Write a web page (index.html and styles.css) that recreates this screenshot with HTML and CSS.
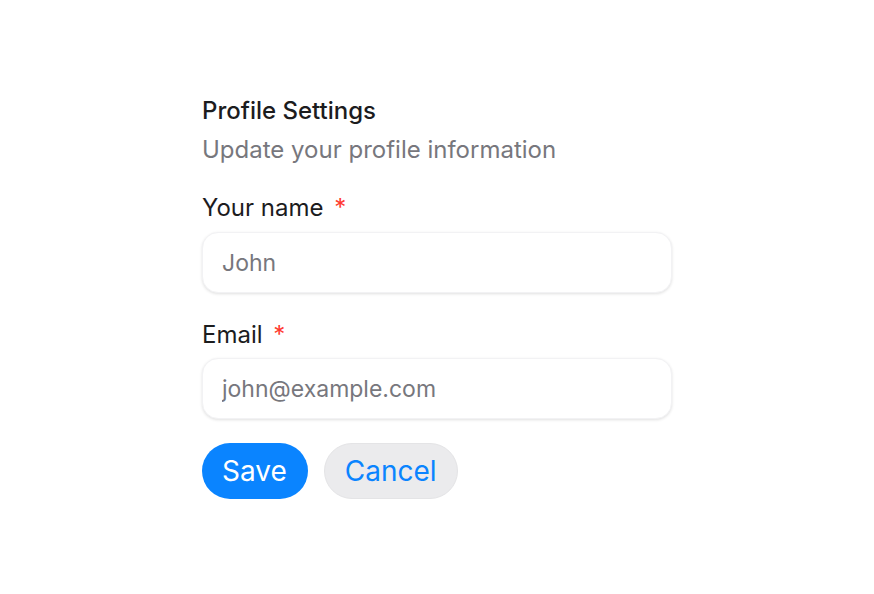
FILE: index.html
```html
<!DOCTYPE html>
<html>
<head>
<meta charset="utf-8">
<link rel="stylesheet" href="styles.css">
</head>
<body>
<main class="page">
  <form class="card">
    <h1 class="title">Profile Settings</h1>
    <p class="subtitle">Update your profile information</p>
    <div class="field">
      <label class="label">Your name <span class="req">*</span></label>
      <input class="input" type="text" placeholder="John">
    </div>
    <div class="field">
      <label class="label">Email <span class="req">*</span></label>
      <input class="input input-last" type="email" placeholder="john@example.com">
    </div>
    <div class="actions">
      <button type="button" class="btn btn-primary">Save</button>
      <button type="button" class="btn btn-secondary">Cancel</button>
    </div>
  </form>
</main>
</body>
</html>
```
FILE: styles.css
```css
html, body {
  margin: 0;
  padding: 0;
  background: #ffffff;
}
body {
  font-family: Inter, "Noto Sans", sans-serif;
  color: #1c1c1e;
}
.page {
  width: 874px;
  height: 594px;
  display: flex;
  justify-content: center;
  align-items: center;
}
.card {
  width: 470px;
  display: flex;
  flex-direction: column;
}
.title {
  margin: 1px 0 0;
  font-size: 24px;
  font-weight: 500;
  line-height: 29px;
  color: #1c1c1e;
}
.subtitle {
  margin: 10px 0 0;
  font-size: 24px;
  font-weight: 400;
  line-height: 29px;
  color: #77777d;
}
.field {
  display: flex;
  flex-direction: column;
  margin-top: 29px;
}
.field + .field {
  margin-top: 27px;
}
.label {
  font-size: 24px;
  line-height: 29px;
  color: #1c1c1e;
}
.req {
  color: #ff3b30;
  margin-left: 4px;
}
.input {
  margin-top: 10px;
  height: 61px;
  box-sizing: border-box;
  border: 1px solid #f2f2f4;
  border-radius: 16px;
  padding: 0 19px;
  font-family: Inter, "Noto Sans", sans-serif;
  font-size: 23px;
  color: #1c1c1e;
  background: #fff;
  box-shadow: 0 1px 3px rgba(0,0,0,0.12);
  outline: none;
}
.input-last {
  margin-top: 9px;
}
.input::placeholder {
  color: #77777d;
}
.actions {
  display: flex;
  gap: 16px;
  margin-top: 24px;
}
.btn {
  height: 56px;
  border-radius: 28px;
  padding: 0 20px;
  font-family: Inter, "Noto Sans", sans-serif;
  font-size: 28px;
  border: none;
  cursor: pointer;
}
.btn-primary {
  background: #0a84ff;
  color: #fff;
  padding: 0 21px 0 20px;
}
.btn-secondary {
  background: #ebebed;
  color: #0a84ff;
  border: 1px solid #e4e4e6;
}
```
